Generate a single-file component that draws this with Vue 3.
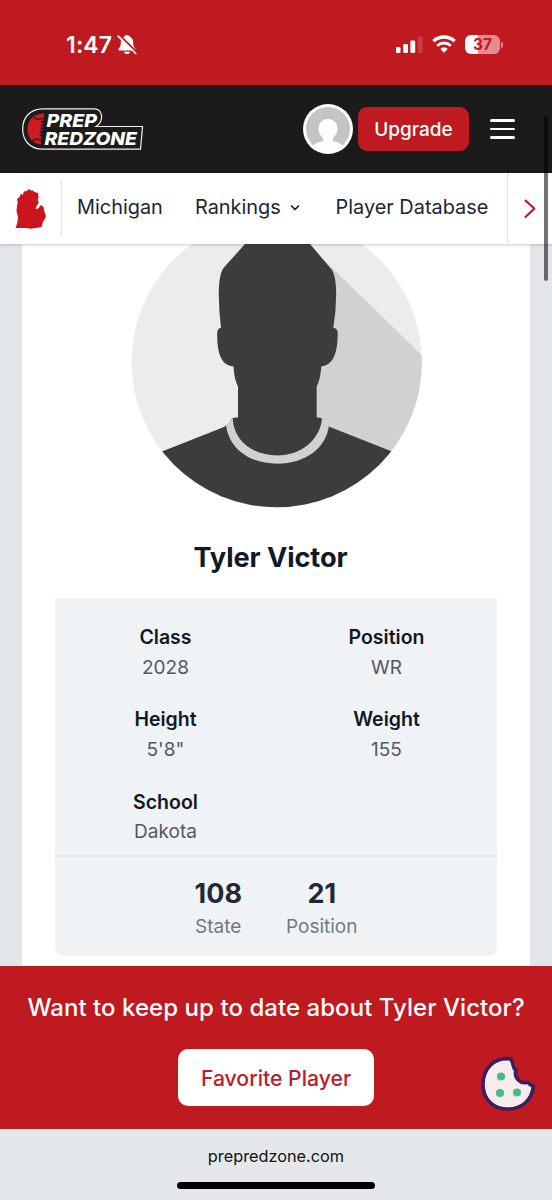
<script setup>
const facts = [
  { label: 'Class', value: '2028' },
  { label: 'Position', value: 'WR' },
  { label: 'Height', value: '5\'8"' },
  { label: 'Weight', value: '155' },
  { label: 'School', value: 'Dakota' },
]
const ranks = [
  { value: '108', label: 'State' },
  { value: '21', label: 'Position' },
]
</script>

<template>
  <div class="screen">
    <div class="status">
      <div class="clock">
        <span class="time">1:47</span>
        <svg class="bell" width="20" height="21" viewBox="0 0 20 21">
          <path d="M10 1C8.500 1 7.700 1.900 7.500 2.600C4.800 3.600 3.800 6 3.800 8.500C3.800 12 3.200 12.800 1.900 14.200C.9 15.500 1.500 16.400 2.700 16.400H17.300C18.500 16.400 18.900 15.500 18 14.200C16.800 12.900 16.200 12 16.200 8.500C16.200 6 15.200 3.600 12.500 2.600C12.300 1.900 11.500 1 10 1Z" fill="#fff" />
          <path d="M6.800 17.800H13.200C12.500 20.800 7.500 20.800 6.800 17.800Z" fill="#fff" />
          <path d="M2 .8L20 18.300" stroke="#be1a20" stroke-width="2" />
          <path d="M1.200 2.200L18.800 19.500" stroke="#fff" stroke-width="1.700" stroke-linecap="round" />
        </svg>
      </div>
      <div class="signals">
        <svg width="28" height="18" viewBox="0 0 28 18">
          <rect x="0" y="11" width="4.500" height="6" rx="1.300" fill="#fff" />
          <rect x="7.200" y="8" width="4.800" height="9" rx="1.300" fill="#fff" />
          <rect x="14.400" y="4.500" width="4.800" height="12.500" rx="1.300" fill="#fff" />
          <rect x="22" y="0.500" width="4.600" height="16.500" rx="1.300" fill="#d03a41" />
        </svg>
        <svg class="wifi" width="24" height="18" viewBox="0 0 24 18" fill="none" stroke="#fff" stroke-width="3.300">
          <path d="M1.400 6.200C7.300.6 16.700.6 22.600 6.200" />
          <path d="M5.200 10.700C9.100 7.100 14.900 7.100 18.800 10.700" stroke-width="2.900" />
          <path d="M8.300 14C10.400 12.100 13.600 12.100 15.700 14L12 17.800Z" fill="#fff" stroke="none" />
        </svg>
        <div class="battery"><span>37</span></div>
        <i class="battery-tip"></i>
      </div>
    </div>

    <header class="header">
      <svg class="logo" width="124" height="46" viewBox="20 106 124 46">
        <path d="M43 108.800H94C103.500 108.800 104 121.500 96 126.500H142.500L140.500 149.200H43C29.500 149.200 22.700 140 22.700 129C22.700 118 29.500 108.800 43 108.800Z" fill="#1b1b1b" stroke="#f2f2f2" stroke-width="1.200" />
        <path d="M44.500 113.500L41 144.800C32 143.500 27 137 27.500 128.500C28 119 34 113.500 44.500 113.500Z" fill="#ce1b23" />
        <path d="M34 117C36 121 40 119.500 45 117.500M32.500 141C35 137.500 38.500 139.500 43 142" fill="none" stroke="#1b1b1b" stroke-width="1.300" />
        <path d="M42.500 121L40.500 138" stroke="#1b1b1b" stroke-width="2.500" stroke-dasharray="2 1.300" />
        <path d="M46 112L42 146" stroke="#1b1b1b" stroke-width="2.500" />
        <g font-family="Inter, sans-serif" font-weight="800" font-style="italic" font-size="18" fill="#fff">
          <text x="46.500" y="126.800" textLength="50.500" lengthAdjust="spacingAndGlyphs">PREP</text>
          <text x="44.500" y="144.900" textLength="92.500" lengthAdjust="spacingAndGlyphs">REDZONE</text>
        </g>
      </svg>
      <div class="avatar">
        <svg width="44" height="44" viewBox="0 0 44 44">
          <circle cx="22" cy="22" r="22" fill="#c4c4c4" />
          <path d="M22 12C27.500 12 31.500 16 31.500 22C31.500 26 29.500 29 27 31V34C31 35 34 35.500 36.500 38.500Q30 44 22 44T7.500 38.500C10 35.500 13 35 17 34V31C14.500 29 12.500 26 12.500 22C12.500 16 16.500 12 22 12Z" fill="#fff" />
        </svg>
      </div>
      <button class="upgrade">Upgrade</button>
      <div class="burger"><i></i><i></i><i></i></div>
    </header>

    <nav class="nav">
      <div class="state">
        <svg width="32" height="42" viewBox="15 188 32 42">
          <path d="M28.500 189L31 190.500L33 190.600L34.500 192L38 193L38.600 197L37.800 200L38.800 202.500L37 205.500L35.500 208.500L37.500 209L41 205L43.500 207L44.500 212L46 216L44.500 219.500L43 222L41.500 227L36 228L30 228.700L27 228H15.500L17.300 223L18 217L16.500 211L17 206L17.800 202L16.800 199.500L20 196.500L20.800 193.500L22.500 195L24 191.500L27 191Z" fill="#ca151e" />
        </svg>
      </div>
      <span class="michigan">Michigan</span>
      <span class="rankings">Rankings</span>
      <svg class="chev" width="10" height="8" viewBox="0 0 10 8" fill="none" stroke="#172033" stroke-width="1.700" stroke-linecap="round" stroke-linejoin="round"><path d="M1.500 2L5 5.500L8.500 2" /></svg>
      <span class="database">Player Database</span>
      <div class="next">
        <svg width="14" height="20" viewBox="0 0 14 20" fill="none" stroke="#bf1720" stroke-width="2.100" stroke-linecap="round" stroke-linejoin="round"><path d="M2.500 1.500L11.300 9.500L2.500 18" /></svg>
      </div>
    </nav>

    <main class="content">
      <section class="card">
        <svg class="photo" width="292" height="264" viewBox="131 244 292 264">
          <defs><clipPath id="portrait"><circle cx="276.700" cy="362" r="145.200" /></clipPath></defs>
          <g clip-path="url(#portrait)">
            <rect x="131" y="216" width="292" height="292" fill="#ececec" />
            <path d="M323 259L425 358.500V470H277V259Z" fill="#d1d1d1" />
            <path d="M245 244L223.500 268Q219 274 218.700 294Q219 312 221 328Q217.500 328 217.200 333Q216.500 366 233.500 366.500Q234 379 238 386.500V417.500Q232 417 231 420Q228 425 224 427L162 451.500V510H392V451.500L330 427Q325 425 323 420Q322 417 316.700 417.500V386.500Q320.500 379 321.300 366.500Q338 365 337.700 333Q337.500 328 333.300 328Q336 312 336.200 294Q336 276 332 270L310 244L300 235H255Z" fill="#3c3c3c" />
            <path d="M232.700 418.500L226 425C229 449 250 463.700 277.300 463.700C305 463.700 327 448 329 424.500L322 418.500C320 440 301 455.400 277.300 455.400C254 455.400 234 442 232.700 418.500Z" fill="#d3d0cf" />
          </g>
        </svg>
        <h1>Tyler Victor</h1>
        <div class="panel">
          <div class="facts">
            <div v-for="f in facts" :key="f.label" class="fact">
              <strong>{{ f.label }}</strong>
              <span>{{ f.value }}</span>
            </div>
          </div>
          <div class="ranks">
            <div v-for="r in ranks" :key="r.label" class="rank">
              <b>{{ r.value }}</b>
              <span>{{ r.label }}</span>
            </div>
          </div>
        </div>
      </section>
    </main>

    <section class="banner">
      <p>Want to keep up to date about Tyler Victor?</p>
      <button>Favorite Player</button>
      <svg class="cookie" width="56" height="58" viewBox="0 0 56 58">
        <path d="M31 3C14 .5 3 13 3 28.500C3 43 13 53 28 53C42 53 52 44 53.500 30C50.500 30 49 26.500 47 26.200C41 28.500 33.500 22 36 14C32.500 13 34 8 31 3Z" fill="#f8ebee" stroke="#3c1d5d" stroke-width="3.600" stroke-linejoin="round" />
        <g fill="#48bd83"><circle cx="21" cy="20.500" r="4.100" /><circle cx="20" cy="37" r="4.100" /><circle cx="37" cy="36.500" r="4.100" /></g>
      </svg>
    </section>

    <footer class="browser">
      <span>prepredzone.com</span>
      <i></i>
    </footer>
    <i class="scrollbar"></i>
  </div>
</template>

<style>
body { margin: 0; }
</style>

<style scoped>
* { box-sizing: border-box; }
.screen { position: relative; width: 552px; height: 1200px; overflow: hidden; display: flex; flex-direction: column; font-family: Inter, "Liberation Sans", sans-serif; background: #fff; }
svg { display: block; flex: none; }
button { border: 0; padding: 0; font-family: inherit; }
.status { height: 85px; flex: none; background: #be1a20; display: flex; justify-content: space-between; padding: 34px 49px 0 66px; color: #fff; }
.clock { display: flex; align-items: flex-start; height: 22px; }
.time { width: 51px; font-size: 23px; line-height: 22px; font-weight: 600; letter-spacing: 0.150px; white-space: nowrap; }
.signals { display: flex; align-items: flex-start; padding-top: 2px; }
.wifi { margin: -1px 9px 0 8px; }
.battery { width: 35px; height: 19px; margin-top: -1px; border-radius: 6px; background: linear-gradient(90deg, #fff 37%, #e78b90 37%); color: #be1a20; font-size: 15.500px; line-height: 19px; font-weight: 700; text-align: center; }
.battery-tip { width: 2px; height: 6px; margin: 6px 0 0 1px; border-radius: 0 3px 3px 0; background: #e78b90; }
.header { height: 88px; flex: none; background: #1b1b1b; display: flex; align-items: center; padding-left: 20px; }
.avatar { width: 50px; height: 50px; margin-left: 159px; border-radius: 50%; background: #fff; padding: 3px; }
.upgrade { width: 111px; height: 44px; margin-left: 5px; border-radius: 9px; background: #be1a20; color: #fff; font-size: 19px; font-weight: 500; }
.burger { margin-left: 21px; width: 25px; display: flex; flex-direction: column; gap: 6px; }
.burger i { height: 2.600px; border-radius: 2px; background: #fff; }
.nav { position: relative; z-index: 1; height: 71px; flex: none; display: flex; align-items: center; background: #fff; box-shadow: 0 1px 3px #0003; color: #1d2634; font-size: 19.900px; white-space: nowrap; }
.nav span { margin-top: -4px; }
.state { width: 62px; height: 56px; padding: 8px 0 0 15px; border-right: 1px solid #e2e4e7; margin-top: -1px; }
.michigan { width: 118px; padding-left: 15px; }
.rankings { width: 110px; padding-left: 15px; }
.chev { margin: -1px 35px 0 0; }
.database { width: 172px; padding-left: 0.500px; }
.next { width: 45px; height: 71px; border-left: 1px solid #e2e4e7; padding: 26px 0 0 15px; }
.content { height: 722px; flex: none; padding: 0 22px; background: #e2e6ea; overflow: hidden; }
.card { height: 722px; background: #fff; padding: 0 33px; display: flex; flex-direction: column; align-items: center; }
.photo { margin-left: 2px; }
h1 { margin: 32px 0 0 -11px; font-size: 27.200px; line-height: 36px; font-weight: 700; letter-spacing: -0.080px; color: #111827; white-space: nowrap; }
.panel { width: 442px; height: 358px; margin-top: 22px; background: #f0f3f6; border-radius: 0 0 8px 8px; }
.facts { height: 259px; padding-top: 24px; display: grid; grid-template-columns: 1fr 1fr; grid-auto-rows: 82.400px; border-bottom: 2px solid #e3e7ea; }
.fact { display: flex; flex-direction: column; align-items: center; font-size: 19px; line-height: 30.500px; }
.fact strong { font-weight: 600; color: #111827; font-size: 19.500px; }
.fact span { color: #535963; }
.ranks { display: flex; justify-content: center; gap: 44px; padding-top: 19px; }
.rank { display: flex; flex-direction: column; align-items: center; }
.rank b { font-size: 27px; line-height: 36px; font-weight: 700; color: #1f2937; }
.rank span { font-size: 19px; line-height: 30px; color: #737983; }
.banner { position: relative; height: 163px; flex: none; background: #be1a20; display: flex; flex-direction: column; align-items: center; }
.banner p { margin: 26px 0 25px; font-size: 24px; line-height: 32px; font-weight: 500; letter-spacing: 0.050px; color: #fff; white-space: nowrap; }
.banner button { width: 196px; height: 57px; border-radius: 10px; background: #fff; color: #b8202a; font-size: 21.200px; font-weight: 500; }
.cookie { position: absolute; left: 480px; top: 90px; }
.browser { height: 71px; flex: none; background: #e5e8eb; display: flex; flex-direction: column; align-items: center; color: #111; }
.browser span { margin-top: 16px; font-size: 16.300px; line-height: 22px; }
.browser i { width: 198px; height: 7px; margin-top: 15px; border-radius: 4px; background: #000; }
.scrollbar { position: absolute; z-index: 2; right: 4px; top: 115px; width: 4px; height: 166px; border-radius: 2px; background: #0000008c; }
</style>
